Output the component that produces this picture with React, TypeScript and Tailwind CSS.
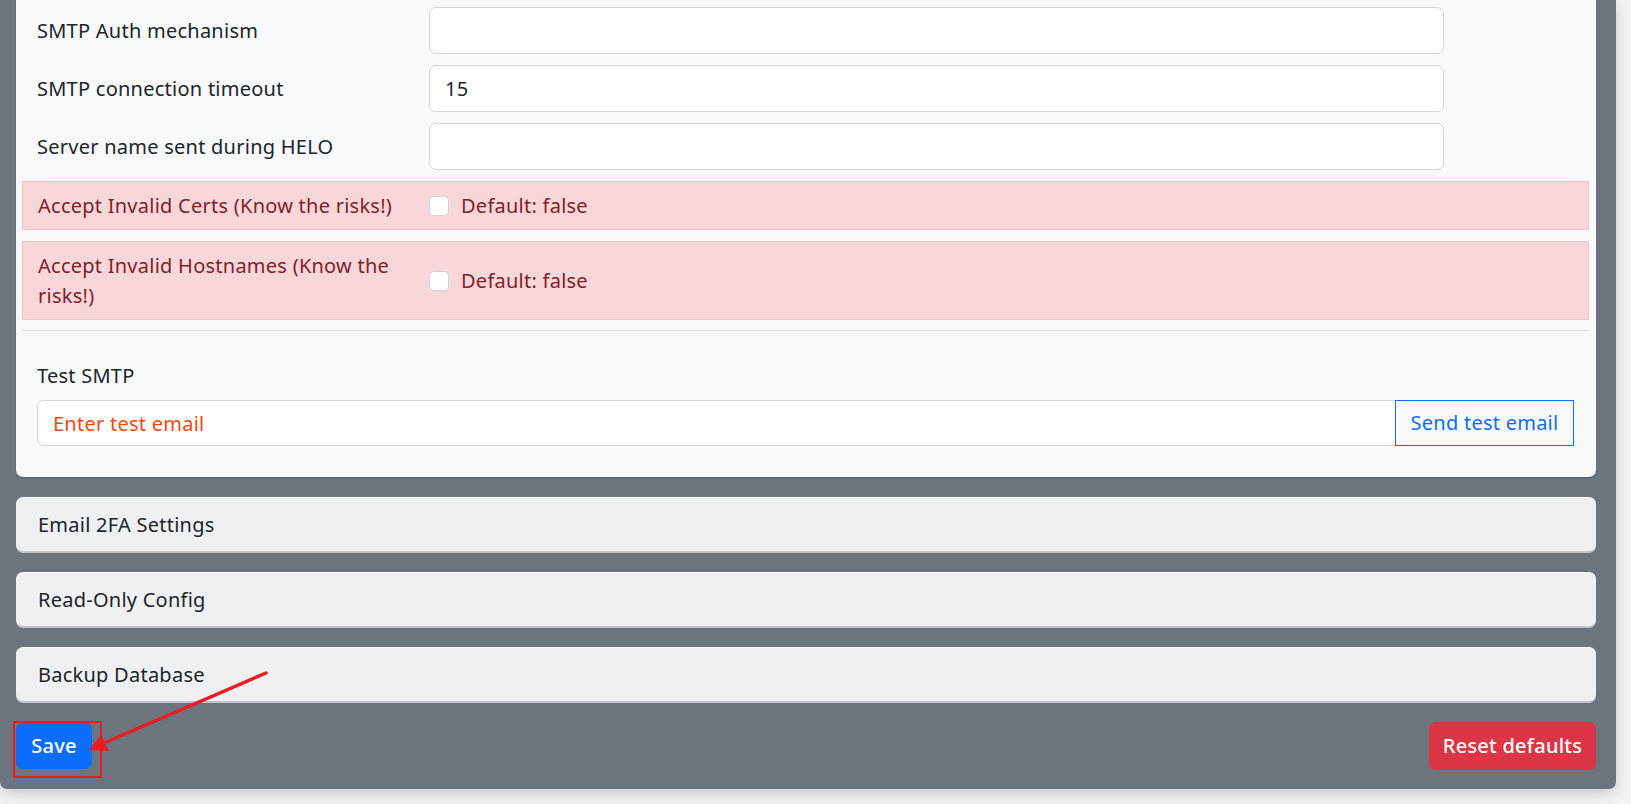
import React from 'react';

const TEXT_ROWS = [
  { label: 'SMTP Auth mechanism', value: '' },
  { label: 'SMTP connection timeout', value: '15' },
  { label: 'Server name sent during HELO', value: '' },
];

const DANGER_ROWS = [
  { label: 'Accept Invalid Certs (Know the risks!)', h: 'h-[49px]' },
  { label: 'Accept Invalid Hostnames (Know the risks!)', h: 'h-[79px]' },
];

const SECTIONS = ['Email 2FA Settings', 'Read-Only Config', 'Backup Database'];

function Checkbox() {
  return (
    <span className="w-[20px] h-[20px] shrink-0 rounded-[5px] bg-white border border-[#d3d6d9]" />
  );
}

export default function App() {
  return (
    <div className="relative h-[804px] overflow-hidden bg-[#f2f3f4] font-['Noto_Sans',sans-serif] text-[20px] leading-[30px] tracking-[0.25px] text-[#212529]">
      {/* dark admin panel */}
      <div className="w-[1616px] bg-[#6c757d] rounded-b-[7px] pl-4 pr-5 pb-[19px] shadow-[0_4px_14px_rgba(0,0,0,0.18)]">
        {/* SMTP card (scrolled, top is off screen) */}
        <div className="bg-[#f8f9fa] rounded-b-[7px] pl-[6px] pr-[7px] pt-[7px] pb-[31px] shadow-[0_1px_1px_rgba(0,0,0,0.25)]">
          {TEXT_ROWS.map((r, i) => (
            <div key={r.label} className={`flex items-center ${i > 0 ? 'mt-[11px]' : ''}`}>
              <label className="w-[392px] shrink-0 px-[15px]">{r.label}</label>
              <div className="w-[1045px] px-[15px]">
                <input
                  readOnly
                  value={r.value}
                  className="w-full h-[47px] rounded-[7px] border border-[#d3d6da] bg-white px-[15px] outline-none"
                />
              </div>
            </div>
          ))}

          {DANGER_ROWS.map((r) => (
            <div
              key={r.label}
              className={`mt-[11px] flex items-center ${r.h} bg-[#f8d7da] border border-[#f5c2c7] text-[#842029]`}
            >
              <label className="w-[391px] shrink-0 px-[15px]">{r.label}</label>
              <div className="flex items-center gap-[12px] px-[15px]">
                <Checkbox />
                <span>Default: false</span>
              </div>
            </div>
          ))}

          <div className="mt-[10px] h-px bg-[#dcdfe2]" />

          <div className="mt-[30px] px-[15px]">
            <div>Test SMTP</div>
            <div className="mt-[9px] flex h-[46px]">
              <input
                placeholder="Enter test email"
                className="flex-1 h-full rounded-l-[7px] border border-[#d3d6da] bg-white px-[15px] outline-none placeholder:text-[#f5470f]"
              />
              <button className="h-full w-[179px] border border-[#0d6efd] text-[#0d6efd] -ml-px">
                Send test email
              </button>
            </div>
          </div>
        </div>

        {/* collapsed sections */}
        {SECTIONS.map((s, i) => (
          <div
            key={s}
            className={`${i === 0 ? 'mt-[20px]' : 'mt-[21px]'} h-[54px] flex items-center px-[22px] rounded-[7px] bg-[#eff0f2] border-t border-[#f7f8f9] shadow-[0_2px_0_#c2c5c9]`}
          >
            {s}
          </div>
        ))}

        <div className="mt-[21px] flex justify-between">
          <button className="h-[47px] w-[76px] rounded-[7px] bg-[#0d6efd] text-white font-medium">Save</button>
          <button className="h-[48px] w-[167px] rounded-[7px] bg-[#dc3545] text-white font-medium">
            Reset defaults
          </button>
        </div>
      </div>

      {/* annotation overlay */}
      <div className="absolute left-[13px] top-[721px] w-[89px] h-[57px] border-2 border-[#ed1c24]" />
      <svg className="absolute left-0 top-0 pointer-events-none" width="1631" height="804">
        <line x1="266" y1="673" x2="104" y2="743" stroke="#ed1c24" strokeWidth="3.5" strokeLinecap="round" />
        <polygon points="89,750 101,735 109,751" fill="#ed1c24" />
      </svg>
    </div>
  );
}
